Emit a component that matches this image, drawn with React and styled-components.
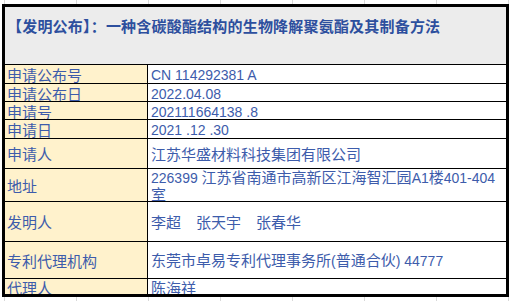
import React from 'react'
import styled, { createGlobalStyle } from 'styled-components'

const GlobalStyle = createGlobalStyle`
  html, body {
    margin: 0;
    padding: 0;
    background: #fff;
  }
  body {
    font-family: "Noto Sans CJK SC", sans-serif;
  }
`

const Sheet = styled.div`
  width: 510px;
  height: 301px;
  overflow: hidden;
  box-sizing: border-box;
  padding: 4px 1px 0 2px;
  background-image: repeating-linear-gradient(
    to right,
    transparent 0 4px,
    #d9d9d9 4px 5px,
    transparent 5px 72px
  );
`

const Table = styled.div`
  width: 507px;
  height: 293px;
  box-sizing: border-box;
  border: 3px solid #000;
  background: #fff;
  overflow: hidden;
  display: flex;
  flex-direction: column;
`

const Title = styled.div`
  flex: none;
  height: 57px;
  box-sizing: border-box;
  padding: 10px 0 0 2px;
  background: #ececec;
  font-size: 15px;
  line-height: 18px;
  font-weight: 700;
  letter-spacing: 0.2px;
  color: #2d4f9e;
  white-space: nowrap;
`

const Row = styled.div`
  flex: none;
  display: grid;
  grid-template-columns: 143px 1fr;
  height: ${p => p.$h}px;
  box-sizing: border-box;
  border-top: 1px solid #000;
`

const Label = styled.div`
  display: flex;
  align-items: center;
  box-sizing: border-box;
  padding-left: 2px;
  background: #fff2cc;
  border-right: 1px solid #000;
  font-size: 15px;
  line-height: 17px;
  color: #3d5cab;
  white-space: nowrap;
`

const Value = styled.div`
  display: flex;
  align-items: ${p => (p.$top ? 'flex-start' : 'center')};
  box-sizing: border-box;
  padding-left: 3px;
  font-size: 15px;
  line-height: ${p => (p.$top ? 16 : 17)}px;
  color: #3d5cab;
  white-space: nowrap;
`

const Latin = styled.span`
  font-family: "Liberation Sans", Arial, sans-serif;
  font-size: 14px;
`

const rows = [
  { label: '申请公布号', h: 19, value: <Latin>CN 114292381 A</Latin> },
  { label: '申请公布日', h: 18, value: <Latin>2022.04.08</Latin> },
  { label: '申请号', h: 18, value: <Latin>202111664138 .8</Latin> },
  { label: '申请日', h: 19, value: <Latin>2021 .12 .30</Latin> },
  { label: '申请人', h: 30, value: '江苏华盛材料科技集团有限公司' },
  {
    label: '地址',
    h: 33,
    top: true,
    value: (
      <>
        <Latin>226399 </Latin>江苏省南通市高新区江海智汇园<Latin>A1</Latin>楼<Latin>401-404</Latin>
        <br />
        室
      </>
    ),
  },
  { label: '发明人', h: 40, value: '李超　张天宇　张春华' },
  {
    label: '专利代理机构',
    h: 37,
    value: (
      <>
        东莞市卓易专利代理事务所<Latin>(</Latin>普通合伙<Latin>) 44777</Latin>
      </>
    ),
  },
  { label: '代理人', h: 16, value: '陈海祥' },
]

export default function App() {
  return (
    <>
      <GlobalStyle />
      <Sheet>
        <Table>
          <Title>【发明公布】：一种含碳酸酯结构的生物降解聚氨酯及其制备方法</Title>
          {rows.map(r => (
            <Row key={r.label} $h={r.h}>
              <Label>{r.label}</Label>
              <Value $top={r.top}>
                <div>{r.value}</div>
              </Value>
            </Row>
          ))}
        </Table>
      </Sheet>
    </>
  )
}
